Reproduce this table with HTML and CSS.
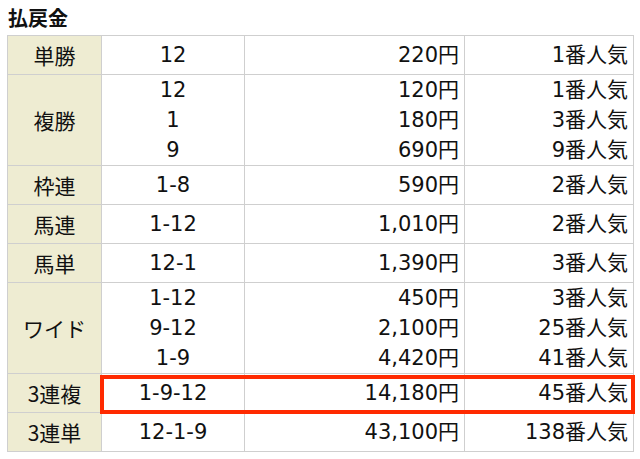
FILE: index.html
```html
<!DOCTYPE html>
<html lang="ja">
<head>
<meta charset="utf-8">
<link rel="stylesheet" href="styles.css">
</head>
<body>
<div class="page">
  <h2 class="title">払戻金</h2>
  <div class="wrap">
    <table class="pay">
      <colgroup>
        <col class="c1"><col class="c2"><col class="c3"><col class="c4">
      </colgroup>
      <tr><th>単勝</th><td class="n">12</td><td class="r">220円</td><td class="r">1番人気</td></tr>
      <tr><th>複勝</th><td class="n">12<br>1<br>9</td><td class="r">120円<br>180円<br>690円</td><td class="r">1番人気<br>3番人気<br>9番人気</td></tr>
      <tr><th>枠連</th><td class="n">1-8</td><td class="r">590円</td><td class="r">2番人気</td></tr>
      <tr><th>馬連</th><td class="n">1-12</td><td class="r">1,010円</td><td class="r">2番人気</td></tr>
      <tr><th>馬単</th><td class="n">12-1</td><td class="r">1,390円</td><td class="r">3番人気</td></tr>
      <tr><th>ワイド</th><td class="n">1-12<br>9-12<br>1-9</td><td class="r">450円<br>2,100円<br>4,420円</td><td class="r">3番人気<br>25番人気<br>41番人気</td></tr>
      <tr><th>3連複</th><td class="n">1-9-12</td><td class="r">14,180円</td><td class="r">45番人気</td></tr>
      <tr><th>3連単</th><td class="n">12-1-9</td><td class="r">43,100円</td><td class="r">138番人気</td></tr>
    </table>
    <div class="hl"></div>
  </div>
</div>
</body>
</html>
```
FILE: styles.css
```css
html, body {
  margin: 0;
  padding: 0;
  background: #ffffff;
}
.page {
  padding: 6px 0 0 7px;
  font-family: "DejaVu Sans", "Noto Sans CJK JP", sans-serif;
  color: #111;
}
.title {
  margin: 0 0 6px 1px;
  font-family: "Noto Sans CJK JP", sans-serif;
  font-size: 20px;
  font-weight: 700;
  line-height: 23px;
}
.wrap {
  position: relative;
  width: 626px;
}
.pay {
  border-collapse: collapse;
  table-layout: fixed;
  width: 626px;
  font-size: 21px;
}
.c1 { width: 94px; }
.c2 { width: 143px; }
.c3 { width: 220px; }
.c4 { width: 169px; }
.pay th, .pay td {
  border: 1px solid #cfcfcf;
  height: 39px;
  padding: 0 5px;
  line-height: 30px;
  vertical-align: middle;
  box-sizing: border-box;
}
.pay th {
  background: #eeecd2;
  font-weight: 400;
  text-align: center;
  font-family: "Noto Sans CJK JP", sans-serif;
}
.pay td.n {
  text-align: center;
}
.pay td.r {
  text-align: right;
}
.hl {
  position: absolute;
  left: 93px;
  top: 340px;
  width: 535px;
  height: 39px;
  border: 4px solid #ff2a00;
  box-sizing: border-box;
}
```
